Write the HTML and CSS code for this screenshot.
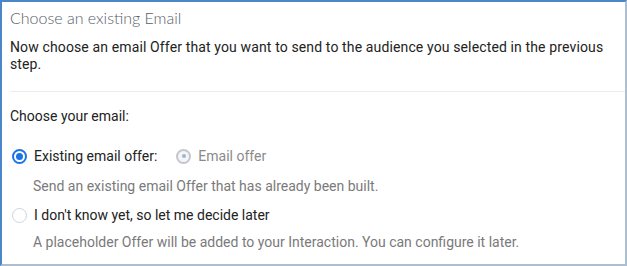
FILE: index.html
```html
<!DOCTYPE html>
<html>
<head>
<meta charset="utf-8">
<link rel="stylesheet" href="styles.css">
</head>
<body>
<div class="panel">
  <div class="title">Choose an existing Email</div>
  <p class="intro">Now choose an email Offer that you want to send to the audience you selected in the previous step.</p>
  <div class="sep"></div>
  <div class="label">Choose your email:</div>
  <div class="option first">
    <span class="radio checked"></span>
    <span class="opt-text">Existing email offer:</span>
    <span class="radio disabled"></span>
    <span class="opt-text muted">Email offer</span>
  </div>
  <div class="desc">Send an existing email Offer that has already been built.</div>
  <div class="option second">
    <span class="radio"></span>
    <span class="opt-text">I don't know yet, so let me decide later</span>
  </div>
  <div class="desc last">A placeholder Offer will be added to your Interaction. You can configure it later.</div>
</div>
</body>
</html>
```

FILE: styles.css
```css
html, body {
  margin: 0;
  padding: 0;
  background: #ffffff;
}
.panel {
  width: 623px;
  height: 262px;
  border-top: 2px solid #4a86c8;
  border-left: 2px solid #4a86c8;
  border-right: 2px solid #aebdd2;
  border-bottom: 2px solid #aebdd2;
  font-family: Roboto, "Liberation Sans", sans-serif;
  font-size: 14px;
  color: #222;
  overflow: hidden;
}
.title {
  margin: 6px 0 0 8px;
  line-height: 20px;
  font-family: Lato, "Open Sans", sans-serif;
  font-weight: 300;
  font-size: 16px;
  color: #56606a;
}
.intro {
  margin: 11px 10px 0 8px;
  line-height: 17px;
  letter-spacing: 0.13px;
}
.sep {
  margin: 18px 0 0 8px;
  height: 1px;
  background: #ececec;
}
.label {
  margin: 14px 0 0 8px;
  line-height: 20px;
}
.option {
  display: flex;
  align-items: center;
  height: 20px;
  margin-left: 10px;
}
.option.first { margin-top: 20px; }
.option.second { margin-top: 9px; }
.radio {
  box-sizing: border-box;
  width: 15px;
  height: 15px;
  border-radius: 50%;
  border: 1.5px solid #c9d5e2;
  background: #fff;
  flex: none;
  display: flex;
  align-items: center;
  justify-content: center;
}
.radio.checked {
  border: 2px solid #1a73e8;
}
.radio.checked::after {
  content: "";
  width: 7px;
  height: 7px;
  border-radius: 50%;
  background: #1a73e8;
}
.radio.disabled {
  margin-left: 19px;
  border: 2px solid #c3c7cc;
  background: #f4f5f7;
}
.radio.disabled::after {
  content: "";
  width: 4px;
  height: 4px;
  border-radius: 50%;
  background: #9fb4d0;
}
.opt-text {
  margin-left: 7px;
  line-height: 20px;
}
.opt-text.muted {
  color: #8a8a8a;
}
.desc {
  margin: 10px 0 0 31px;
  line-height: 20px;
  color: #7a7a7a;
}
.desc.last { margin-top: 7px; }
```
